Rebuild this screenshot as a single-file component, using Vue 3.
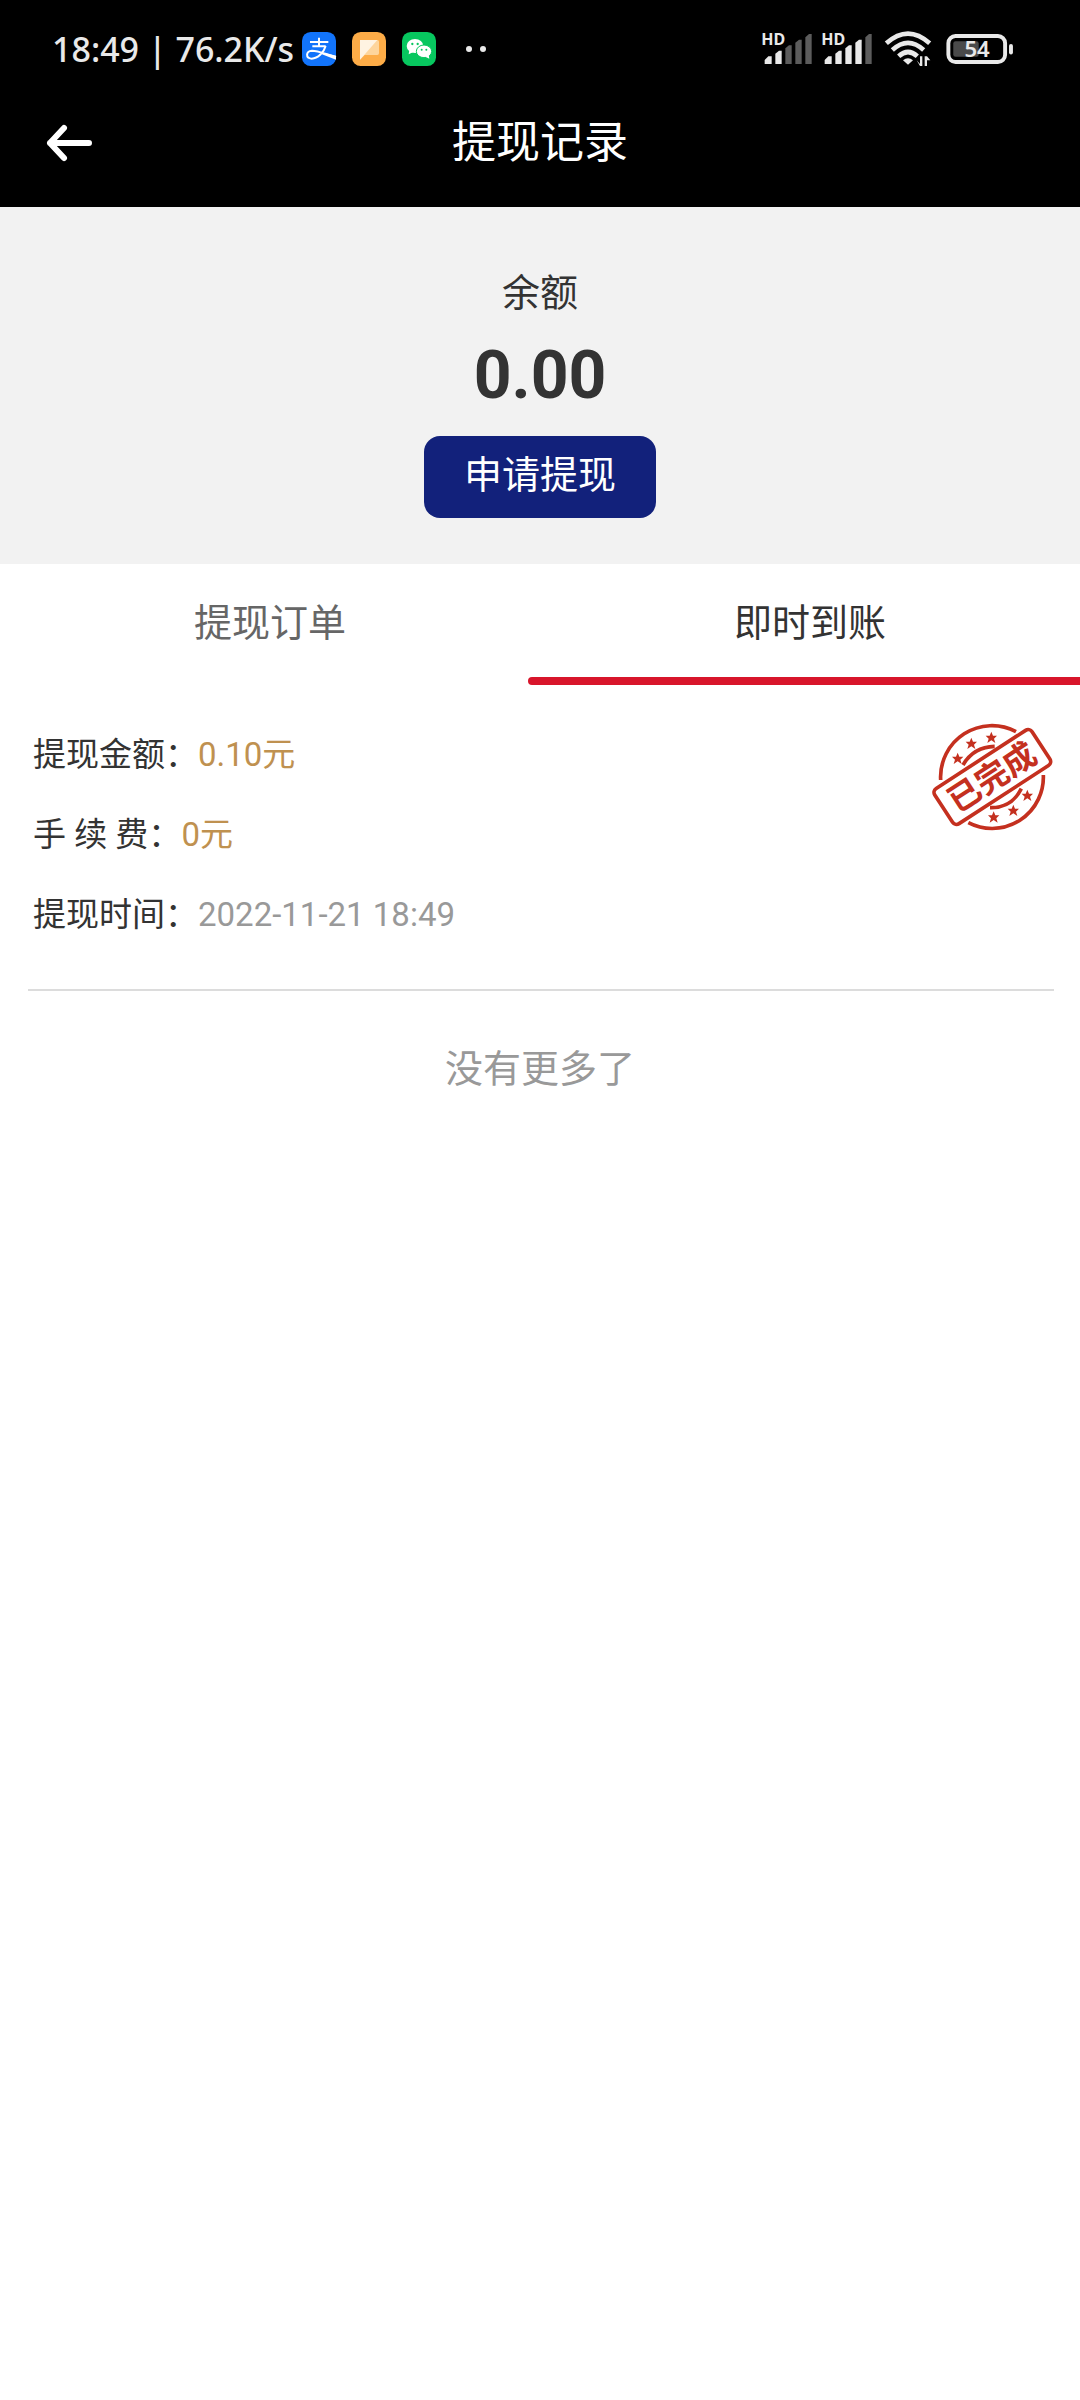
<template>
  <div class="page">
    <header class="top">
      <div class="status-bar">
        <div class="status-left">
          <span class="status-text">18:49 | 76.2K/s</span>
          <svg class="app-icon" viewBox="0 0 102 102">
            <rect width="102" height="102" rx="26" fill="#1274fb" />
            <path d="M24 30H79M51 17V43M31 43H71" fill="none" stroke="#fff" stroke-width="6" />
            <path d="M71 42C66 60 48 80 29 80C10 79 11 57 30 56C50 56 74 68 102 75" fill="none" stroke="#fff" stroke-width="6" />
            <path d="M58 61L102 71V83L56 65Z" fill="#fff" />
          </svg>
          <svg class="app-icon" viewBox="0 0 102 102">
            <rect width="102" height="102" rx="26" fill="#fdac47" />
            <path d="M24 24H76Q81 24 81 29V64Q81 69 76 69H38L24 83Z" fill="#fed59c" />
            <path d="M24 24H76L24 83Z" fill="#fff3e2" />
          </svg>
          <svg class="app-icon" viewBox="0 0 102 102">
            <rect width="102" height="102" rx="26" fill="#07c75f" />
            <ellipse cx="39" cy="42" rx="25" ry="21" fill="#fff" />
            <path d="M22 54L20 67L34 60Z" fill="#fff" />
            <ellipse cx="66" cy="58" rx="23" ry="19" fill="#fff" stroke="#07c75f" stroke-width="3" />
            <path d="M70 74L82 80L80 68Z" fill="#fff" />
            <g fill="#07c75f">
              <circle cx="31" cy="36" r="3.5" />
              <circle cx="47" cy="36" r="3.5" />
              <circle cx="59" cy="53" r="3" />
              <circle cx="73" cy="53" r="3" />
            </g>
          </svg>
          <span class="dots"><i></i><i></i></span>
        </div>
        <div class="status-right">
          <svg v-for="level in signals" :key="level" class="signal" viewBox="0 0 150 102">
            <text x="-2" y="39" class="hd">HD</text>
            <path
              v-for="(d, i) in signalBars"
              :key="d"
              :d="d"
              :fill="i < level ? '#e9e9e9' : '#5c5c5c'"
            />
          </svg>
          <svg class="wifi" viewBox="0 0 138 108">
            <g fill="none" stroke="#e9e9e9" stroke-width="14">
              <path d="M4 37Q69 -21 134 37" />
              <path d="M22 57Q69 14 116 57" />
              <path d="M41 76Q69 50 97 76" />
            </g>
            <path d="M54 88Q69 76 84 88L69 101Z" fill="#e9e9e9" />
            <path d="M95 88L105 99V76H112V105H105ZM119 105V76H126L136 88H126V105Z" fill="#e9e9e9" />
          </svg>
          <svg class="battery" viewBox="0 0 206 92">
            <rect x="6" y="6" width="174" height="80" rx="22" fill="none" stroke="#e9e9e9" stroke-width="12" />
            <rect x="21" y="22" width="78" height="48" rx="7" fill="#4a4a4a" />
            <rect x="192" y="31" width="12" height="32" rx="6" fill="#e9e9e9" />
            <text x="94" y="70" text-anchor="middle" class="battery-num">54</text>
          </svg>
        </div>
      </div>

      <div class="nav-bar">
        <button class="back-btn" type="button" aria-label="返回">
          <svg viewBox="0 0 46 36">
            <path d="M18 3L4 18L18 33M4 18H43" fill="none" stroke="#fff" stroke-width="6" stroke-linecap="round" stroke-linejoin="round" />
          </svg>
        </button>
        <h1 class="nav-title">提现记录</h1>
      </div>
    </header>

    <section class="balance">
      <p class="balance-label">余额</p>
      <p class="balance-num">0.00</p>
      <button class="apply-btn" type="button">申请提现</button>
    </section>

    <nav class="tabs">
      <button
        v-for="(tab, index) in tabs"
        :key="tab"
        type="button"
        class="tab"
        :class="{ active: index === current }"
        @click="current = index"
      >
        {{ tab }}
      </button>
    </nav>

    <ul class="list">
      <li v-for="item in records" :key="item.time" class="record">
        <p class="row">提现金额：<span class="money">{{ item.amount }}元</span></p>
        <p class="row">手 续 费：<span class="money">{{ item.fee }}元</span></p>
        <p class="row">提现时间：<span class="time">{{ item.time }}</span></p>

        <!-- 已完成印章 -->
        <svg class="stamp" viewBox="0 0 366 324">
          <g fill="none" stroke="#c4301f" stroke-width="11">
            <path d="M26 171A154 154 0 0 1 252 26" />
            <path d="M334 156A154 154 0 0 1 109 299" />
            <path d="M93 126Q124 72 188 70" />
            <path d="M174 254Q238 256 268 197" />
            <rect x="7" y="99" width="348" height="126" rx="14" transform="rotate(-33 181 162)" />
          </g>
          <path v-for="s in stars" :key="s" :d="starPath" :transform="`translate(${s})`" fill="#c4301f" />
          <text x="180" y="197" text-anchor="middle" transform="rotate(-33 180 162)" class="stamp-text">已完成</text>
        </svg>
      </li>
    </ul>

    <p class="no-more">没有更多了</p>
  </div>
</template>

<script setup>
import { ref } from 'vue'

const tabs = ['提现订单', '即时到账']
const current = ref(1)

const records = ref([
  { amount: '0.10', fee: '0', time: '2022-11-21 18:49' }
])

// 两张卡的信号格数
const signals = [2, 4]
const signalBars = [
  'M8 96V84L19 73H29V96Z',
  'M40 96V65L51 56H59V96Z',
  'M70 96V49L81 40H89V96Z',
  'M100 96V32L111 23H119V96Z',
  'M130 96V16L141 6H149V96Z'
]

const starPath = 'M0 -18L5 -6L17 -6L8 3L12 16L0 8L-12 16L-8 3L-17 -6L-5 -6Z'
const stars = ['77 107', '118 62', '178 44', '185 283', '244 263', '286 218']
</script>

<style>
body {
  margin: 0;
  background: #fff;
}
</style>

<style scoped>
.page {
  min-height: 100vh;
  background: #fff;
  color: #333;
  font-family: Roboto, 'Noto Sans CJK SC', sans-serif;
  overflow: hidden;
}

p,
h1,
ul {
  margin: 0;
  padding: 0;
}

button {
  border: none;
  padding: 0;
  background: none;
  font-family: inherit;
  cursor: pointer;
}

svg {
  display: block;
  overflow: visible;
}

.top {
  background: #000;
}

/* 状态栏 */
.status-bar {
  display: flex;
  justify-content: space-between;
  align-items: center;
  height: 60px;
  padding: 19px 66px 0 52px;
}

.status-left,
.status-right {
  display: flex;
  align-items: center;
}

.status-left {
  gap: 16px;
}

.status-right {
  gap: 10px;
}

.status-text {
  margin-right: -8px;
  font-family: 'Noto Sans', sans-serif;
  font-size: 34px;
  font-weight: 500;
  line-height: 40px;
  color: #e9e9e9;
  white-space: nowrap;
}

.app-icon {
  width: 34px;
  height: 34px;
}

.dots {
  display: flex;
  gap: 8px;
  margin-left: 14px;
}

.dots i {
  width: 6px;
  height: 6px;
  border-radius: 50%;
  background: #e9e9e9;
}

.signal {
  width: 50px;
  height: 34px;
}

.hd {
  font-family: 'Noto Sans', sans-serif;
  font-size: 48px;
  font-weight: 700;
  fill: #e9e9e9;
}

.wifi {
  width: 46px;
  height: 36px;
  margin: 0 5px 0 3px;
}

.battery {
  width: 68px;
  height: 30px;
}

.battery-num {
  font-family: 'Noto Sans', sans-serif;
  font-size: 68px;
  font-weight: 600;
  fill: #e9e9e9;
}

/* 标题栏 */
.nav-bar {
  display: grid;
  grid-template-columns: 46px 1fr 46px;
  align-items: center;
  height: 128px;
  padding: 0 46px;
}

.back-btn svg {
  width: 46px;
  height: 36px;
}

.nav-title {
  font-size: 44px;
  font-weight: 400;
  line-height: 64px;
  text-align: center;
  color: #fff;
}

/* 余额 */
.balance {
  display: flex;
  flex-direction: column;
  align-items: center;
  padding: 58px 0 46px;
  background: #f2f2f2;
}

.balance-label {
  font-size: 38px;
  line-height: 56px;
}

.balance-num {
  font-size: 66px;
  font-weight: 700;
  line-height: 80px;
  margin: 15px 0 20px;
}

.apply-btn {
  padding: 11px 40px 15px;
  border-radius: 16px;
  background: #12217b;
  color: #fff;
  font-size: 38px;
  line-height: 56px;
}

/* 选项卡 */
.tabs {
  display: grid;
  grid-template-columns: 1fr 1fr;
}

.tab {
  position: relative;
  height: 121px;
  padding-bottom: 3px;
  font-size: 38px;
  line-height: 56px;
  color: #666;
}

.tab.active {
  color: #333;
}

.tab.active::after {
  content: '';
  position: absolute;
  left: -12px;
  right: -12px;
  bottom: 0;
  height: 8px;
  border-radius: 4px;
  background: #d8152b;
}

/* 列表 */
.list {
  list-style: none;
  padding: 0 26px 0 28px;
}

.record {
  position: relative;
  padding: 30px 5px 34px;
  border-bottom: 2px solid #dcdcdc;
}

.row {
  font-size: 33px;
  line-height: 80px;
}

.money {
  color: #bf9150;
}

.time {
  color: #999;
}

.stamp {
  position: absolute;
  top: 38px;
  right: 0;
  width: 122px;
  height: 108px;
}

.stamp-text {
  font-family: 'Noto Sans CJK SC', sans-serif;
  font-size: 98px;
  font-weight: 700;
  fill: #c4301f;
}

.no-more {
  padding: 50px 0;
  font-size: 38px;
  line-height: 56px;
  text-align: center;
  color: #999;
}
</style>
